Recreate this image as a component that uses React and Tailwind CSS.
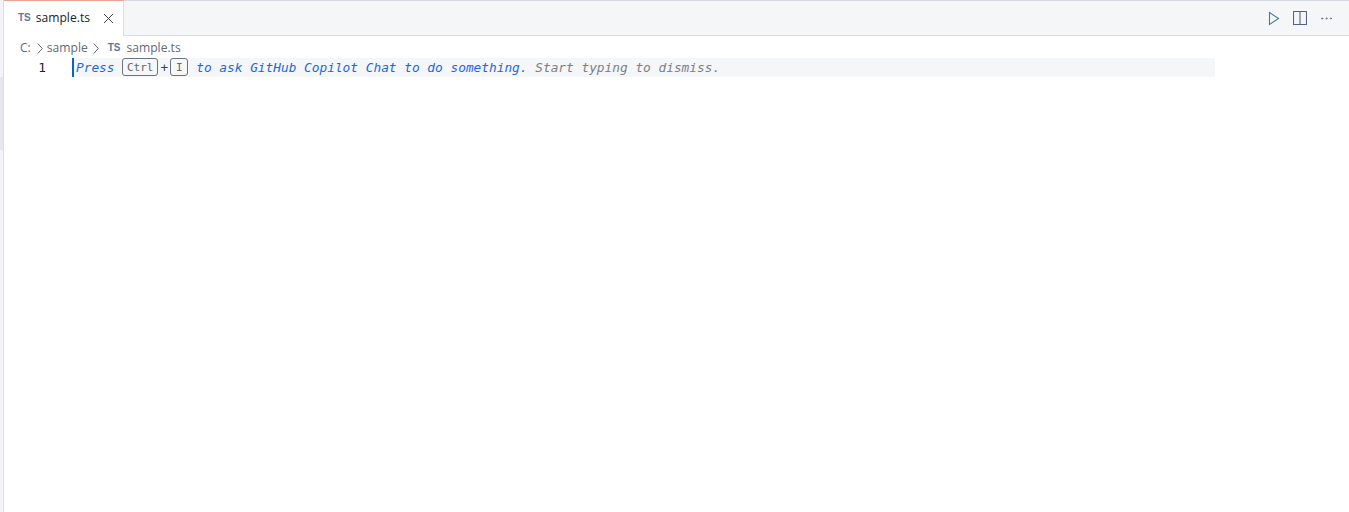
import { Ellipsis, X } from 'lucide-react';

const ui = "font-['Open_Sans','Noto_Sans',sans-serif]";
const mono = "font-['DejaVu_Sans_Mono','Liberation_Mono',monospace]";

function TsIcon({ className = '' }) {
  return <span className={`text-[10px] font-bold text-[#5f7a99] font-['Liberation_Sans',sans-serif] ${className}`}>TS</span>;
}

function Crumb({ className = '' }) {
  return (
    <svg width="6" height="11" viewBox="0 0 6 11" fill="none" stroke="#616a76" strokeWidth="1" className={className}>
      <path d="M0.7 0.5 L5.3 5.5 L0.7 10.5" />
    </svg>
  );
}

function Key({ children, className = '' }) {
  return (
    <span className={`h-[18px] flex items-center justify-center border border-[#6b7280] rounded-[3px] bg-[#f6f7f9] text-[11px] text-[#666] not-italic ${className}`}>
      {children}
    </span>
  );
}

export default function App() {
  return (
    <div className="w-[1349px] h-[512px] flex bg-white overflow-hidden">
      <div className="w-[4px] shrink-0 bg-[#f3f4f7] border-r border-[#d9dde4] flex flex-col">
        <div className="h-[77px]" />
        <div className="h-[73px] bg-[#e5e7ed]" />
      </div>

      <div className="flex-1 flex flex-col min-w-0">
        <div className={`h-[36px] shrink-0 flex bg-[#f5f6f8] border-b border-[#d9dde4] border-t border-t-[#d5d9e2] ${ui}`}>
          <div className="w-[120px] -mt-px h-[36px] bg-white border-r border-[#d9dde4] border-t border-t-[#f0a090] flex items-center pl-[14px] text-[12.1px] text-[#222]">
            <TsIcon className="mr-[5px] -mt-[3px]" />
            <span>sample.ts</span>
            <X size={17} strokeWidth={1.3} className="ml-[10px] text-[#333]" />
          </div>
          <div className="flex-1 flex items-center justify-end pr-[15px]">
            <svg width="12" height="15" viewBox="0 0 12 15" fill="none" stroke="#4a7a8c" strokeWidth="1.1" className="mr-[13px]">
              <path d="M1.5 1.5 L10.5 7.5 L1.5 13.5 Z" />
            </svg>
            <svg width="14" height="14" viewBox="0 0 14 14" fill="none" stroke="#5a5f8a" strokeWidth="1.1" className="mr-[12px]">
              <rect x="0.5" y="0.5" width="13" height="13" rx="0.5" />
              <path d="M7 0.5 V13.5" />
            </svg>
            <Ellipsis size={15} strokeWidth={1.3} className="text-[#5b6b7f]" />
          </div>
        </div>

        <div className={`h-[22px] shrink-0 flex items-center pl-[16px] pt-[2px] text-[12.1px] text-[#616a76] ${ui}`}>
          <span>C:</span>
          <Crumb className="ml-[6px] mr-[4px]" />
          <span>sample</span>
          <Crumb className="ml-[5px] mr-[9px]" />
          <TsIcon className="mr-[6px] -mt-[2px]" />
          <span>sample.ts</span>
        </div>

        <div className={`flex h-[19px] text-[12.8px] leading-[19px] ${mono}`}>
          <div className="w-[42px] text-right text-[#2a1a3a] shrink-0">1</div>
          <div className="w-[26px] shrink-0" />
          <div className="w-[1143px] flex bg-[#f5f6f8] italic whitespace-pre border-l-2 border-[#0b5fd6] pl-[2px]">
            <span className="text-[#1a68d8]">Press </span>
            <Key className="w-[36px]">Ctrl</Key>
            <span className="not-italic text-[#444] w-[12px] text-center">+</span>
            <Key className="w-[18px]">I</Key>
            <span className="w-[8px]" />
            <span className="text-[#1a68d8]">to ask GitHub Copilot Chat to do something. </span>
            <span className="text-[#7a7f87]">Start typing to dismiss.</span>
          </div>
        </div>
      </div>
    </div>
  );
}
